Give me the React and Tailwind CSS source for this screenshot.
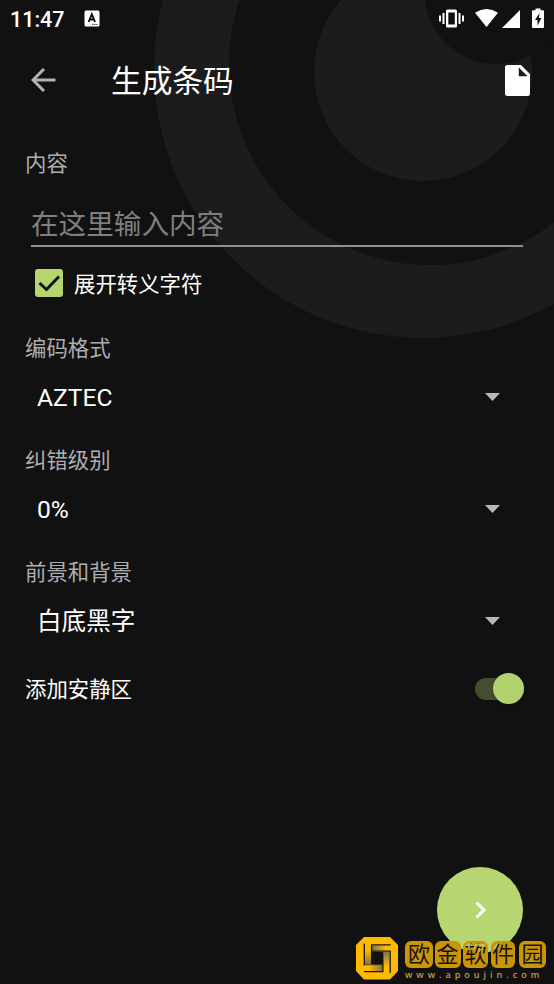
const SectionLabel = ({ children }) => (
  <p className="h-8 pl-[25px] pt-px text-[21.4px] leading-8 text-[#aeaeae]">{children}</p>
);

const Select = ({ value }) => (
  <button className="mt-[9px] flex h-12 w-full items-center justify-between pl-[37px] pr-[54px] text-left text-[24.6px] leading-none text-white">
    <span className="pt-[3px]">{value}</span>
    <svg width="15" height="8" viewBox="0 0 15 8">
      <path d="M0 0h15L7.5 8z" fill="#b8b8b8" />
    </svg>
  </button>
);

const Backdrop = () => (
  <svg
    className="absolute left-0 top-0"
    width="554"
    height="340"
    viewBox="0 0 554 340"
  >
    <circle cx="423" cy="69" r="269" fill="#1c1c1c" />
    <circle cx="430" cy="64" r="201" fill="#111111" />
    <circle cx="423" cy="72" r="109" fill="#1c1c1c" />
    <circle cx="496" cy="-7.5" r="71.5" fill="#111111" />
  </svg>
);

const StatusBar = () => (
  <div className="flex h-[37px] items-center pl-[10px]">
    <span className="w-[74px] pt-0.5 text-[21.5px] font-medium leading-none text-white">11:47</span>
    <svg width="16" height="17" viewBox="0 0 16 17">
      <rect x="0.5" y="0.5" width="15" height="16" rx="1.5" fill="#fff" />
      <path d="M4.6 12 7.8 4.2 11 12M5.8 9.5h4" fill="none" stroke="#111" strokeWidth="1.9" />
      <path d="M8 14.4h6" stroke="#111" strokeWidth="0.8" strokeDasharray="1.5 .6" />
    </svg>
    <svg className="ml-auto" width="115" height="22" viewBox="0 0 115 22" fill="#fff">
      <path
        fillRule="evenodd"
        d="M8.500 1.500h8a1.500 1.500 0 0 1 1.500 1.500v15a1.500 1.500 0 0 1-1.500 1.500h-8A1.500 1.500 0 0 1 7 18V3a1.500 1.500 0 0 1 1.500-1.500zM9.300 4.500v12h6.500v-12z"
      />
      <path d="M3.500 5h2v11h-2zM0 7.500h2v6H0zM19.500 5h2v11h-2zM23 7.500h2v6h-2z" />
      <path d="M36 4.800Q47.500-2.600 59 4.800L47.500 19z" />
      <path d="M81 2V20H63z" />
      <path
        fillRule="evenodd"
        d="M96.500 .5h5v1.800h2.500a1 1 0 0 1 1 1v15.700a1 1 0 0 1-1 1H94a1 1 0 0 1-1-1V3.300a1 1 0 0 1 1-1h2.500zM100.500 5l-4.500 7h2.500v5.500l4-7.500H100z"
      />
    </svg>
  </div>
);

const SEALS = [
  { char: "欧", className: "w-[28px]" },
  { char: "金", className: "ml-[1.5px] w-[26px]" },
  { char: "软", className: "ml-[2.5px] w-[25px]" },
  { char: "件", className: "ml-[3px] w-[24px]" },
  { char: "园", className: "ml-[4px] w-[27px]" },
];

// one half of the knot; the other half is the same shape turned by 180°
const KnotHalf = () => (
  <>
    <path d="M16 8.500h18v5.700H16z" fill="url(#foldH)" />
    <path d="M9 8.500h6v19H9z" fill="url(#foldV)" />
    <path d="M8.300 6.500v21.700h18.500M15.600 27V7.800h19" fill="none" stroke="#1a160c" strokeWidth="1.300" />
  </>
);

const Watermark = () => (
  <div className="absolute left-[356px] top-[937px] flex">
    <svg width="43" height="43" viewBox="0 0 43 43">
      <defs>
        <linearGradient id="foldH">
          <stop offset="0" stopColor="#7d7250" />
          <stop offset="0.75" stopColor="#ffba00" />
        </linearGradient>
        <linearGradient id="foldV" x1="0" y1="0" x2="0" y2="1">
          <stop offset="0.25" stopColor="#ffba00" />
          <stop offset="1" stopColor="#7d7250" />
        </linearGradient>
      </defs>
      <path d="M8 0h26l8 8v26l-8 8.500H8L0 34V8z" fill="#ffba00" />
      <path d="M15.500 14.800h11.500v12.800H15.500z" fill="#111" />
      <KnotHalf />
      <g transform="rotate(180 21.250 21.200)">
        <KnotHalf />
      </g>
    </svg>
    <div className="pl-[6px] pt-1">
      <div className="relative flex">
        {SEALS.map(({ char, className }) => (
          <span
            key={char}
            className={`flex h-[27px] items-center justify-center rounded-[6px] bg-[#cb9605] text-[22px] leading-none text-[#16130a] ${className}`}
          >
            {char}
          </span>
        ))}
        <svg
          className="absolute left-[56px] top-0"
          width="44"
          height="14"
          viewBox="0 0 44 14"
          fill="none"
          stroke="#b7c873"
          strokeWidth="1.5"
        >
          <path d="M5 4h6M8 2v7M15 3l-2 5M15 4h8l-2 4M18 7v4M36 3l-3 5" />
        </svg>
      </div>
      <p className="w-0 whitespace-nowrap font-['Open_Sans'] text-[9px] font-semibold leading-[13px] tracking-[4px] text-[#d09a3c]">
        www.apoujin.com
      </p>
    </div>
  </div>
);

const App = () => {
  return (
    <div className="relative h-[984px] w-[554px] overflow-hidden bg-[#111111] font-[Roboto,'Noto_Sans_CJK_SC',sans-serif]">
      <Backdrop />
      <div className="relative">
        <StatusBar />
        <header className="flex h-[86px] items-center pl-[31px] pr-6">
          <svg width="25" height="24" viewBox="0 0 25 24" fill="none" stroke="#b3b3b3" strokeWidth="3">
            <path d="M24.500 12H2.500M13 1 2 12l11 11" />
          </svg>
          <h1 className="ml-[55px] pt-[4px] text-[30.700px] leading-none text-white">生成条码</h1>
          <svg className="ml-auto" width="25" height="31" viewBox="0 0 25 31">
            <path
              fillRule="evenodd"
              d="M2.500 0h13.500L25 9v19.500a2.500 2.500 0 0 1-2.500 2.500h-20A2.500 2.500 0 0 1 0 28.500v-26A2.500 2.500 0 0 1 2.500 0zM13.800 2.500v8.700h8.700z"
              fill="#fff"
            />
          </svg>
        </header>

        <main className="pt-6">
          <SectionLabel>内容</SectionLabel>
          <div className="ml-[31px] mt-[19px] h-[49px] w-[492px] border-b-2 border-[#8f8f8f]">
            <input
              className="block h-[52px] w-full bg-transparent text-[27.600px] text-white outline-none placeholder:text-[#7f7f7f]"
              placeholder="在这里输入内容"
            />
          </div>
          <label className="flex h-[72px] items-center pl-[35px]">
            <svg width="28" height="28" viewBox="0 0 28 28">
              <rect width="28" height="28" rx="3" fill="#b5d56f" />
              <path d="m4.500 14 7 6.500L24 7.500" fill="none" stroke="#111" strokeWidth="3" />
            </svg>
            <span className="ml-[11px] pt-[4px] text-[21.400px] text-white">展开转义字符</span>
          </label>

          <div className="mt-[13px] h-[112px]">
            <SectionLabel>编码格式</SectionLabel>
            <Select value="AZTEC" />
          </div>
          <div className="h-[112px]">
            <SectionLabel>纠错级别</SectionLabel>
            <Select value="0%" />
          </div>
          <div className="h-[112px]">
            <SectionLabel>前景和背景</SectionLabel>
            <Select value="白底黑字" />
          </div>

          <div className="mt-[4.500px] flex h-8 items-center justify-between pl-[25px] pr-[30px]">
            <span className="pt-[3px] text-[21.400px] text-white">添加安静区</span>
            <div className="flex h-[22px] w-[49px] items-center justify-end rounded-full bg-[#444e2e]">
              <span className="h-[31px] w-[31px] shrink-0 rounded-full bg-[#b2d270] shadow" />
            </div>
          </div>
        </main>
      </div>

      <button className="absolute left-[437px] top-[867px] flex h-[86px] w-[86px] items-center justify-center rounded-full bg-[#b7d672]">
        <svg className="ml-0.5" width="12" height="18" viewBox="0 0 12 18" fill="none" stroke="#fff" strokeWidth="3">
          <path d="m1.500 1.500 7.500 7.500-7.500 7.500" />
        </svg>
      </button>
      <Watermark />
    </div>
  );
};

export default App;
